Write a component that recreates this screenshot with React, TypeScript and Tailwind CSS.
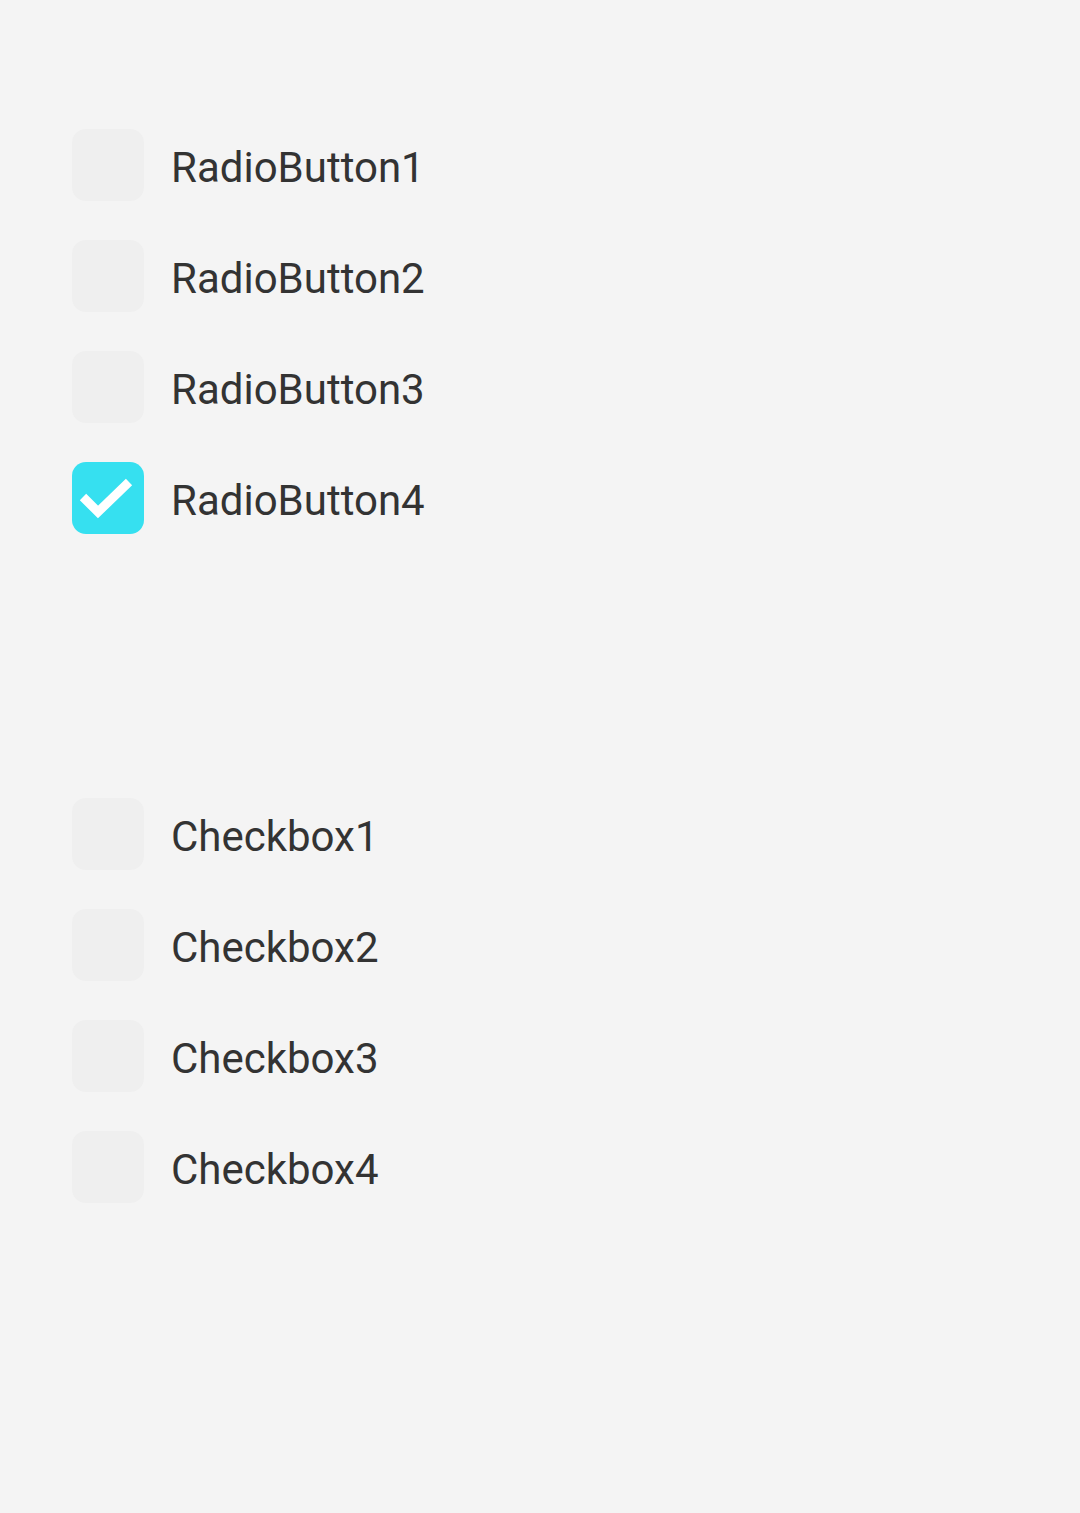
const radios = ['RadioButton1', 'RadioButton2', 'RadioButton3', 'RadioButton4'];
const checks = ['Checkbox1', 'Checkbox2', 'Checkbox3', 'Checkbox4'];

function Box({ checked }: { checked: boolean }) {
  return (
    <div
      className={`w-[72px] h-[72px] rounded-[14px] shrink-0 flex items-center justify-center ${
        checked ? 'bg-[#36e0f0]' : 'bg-[#efefef]'
      }`}
    >
      {checked && (
        <svg width="72" height="72" viewBox="0 0 72 72">
          <path d="M11 35 L26 50 L57 20" fill="none" stroke="#fff" strokeWidth="9" />
        </svg>
      )}
    </div>
  );
}

function Row({ label, checked }: { label: string; checked: boolean }) {
  return (
    <div className="flex items-center h-[72px] mb-[39px]">
      <Box checked={checked} />
      <span className="ml-[27px] mt-[6px] text-[42px] text-[#333333] leading-none">{label}</span>
    </div>
  );
}

export default function App() {
  return (
    <div className="w-[1080px] h-[1513px] bg-[#f4f4f4] pl-[72px] pt-[129px]" style={{ fontFamily: 'Roboto, sans-serif' }}>
      {radios.map((r, i) => (
        <Row key={r} label={r} checked={i === 3} />
      ))}
      <div className="h-[225px]" />
      {checks.map((c) => (
        <Row key={c} label={c} checked={false} />
      ))}
    </div>
  );
}
